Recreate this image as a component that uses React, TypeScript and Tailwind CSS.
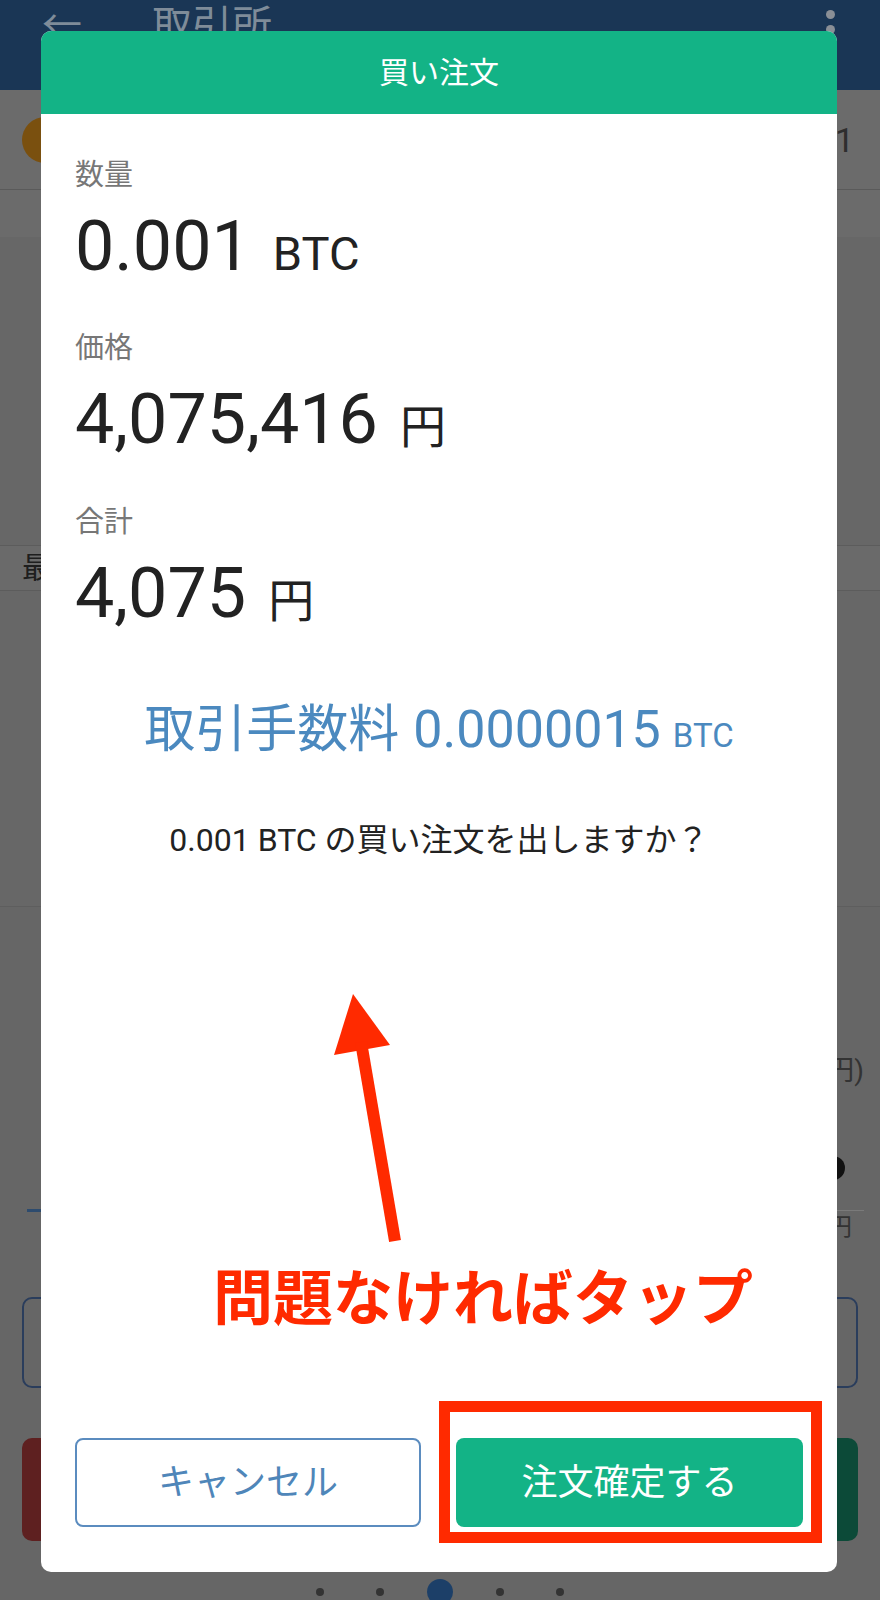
const font = "font-['Roboto','Noto_Sans_CJK_JP',sans-serif]";

function BackgroundScreen() {
  return (
    <div className="flex h-[1600px] w-[880px] flex-col bg-[#676767]">
      <header className="flex h-[90px] shrink-0 items-start bg-[#1a3655] px-[42px] pt-[6px] text-[#7f8c99]">
        <span className="w-[110px] text-[40px] leading-none">←</span>
        <span className="text-[40px] leading-none">取引所</span>
        <span className="ml-auto mt-[4px] flex flex-col gap-[6px] pr-[3px]">
          <span className="h-[9px] w-[9px] rounded-full bg-[#8a8f96]" />
          <span className="h-[9px] w-[9px] rounded-full bg-[#8a8f96]" />
          <span className="h-[9px] w-[9px] rounded-full bg-[#8a8f96]" />
        </span>
      </header>
      <div className="flex h-[100px] shrink-0 items-center justify-between border-b border-[#5a5a5a] bg-[#6b6b6b] pl-[22px] pr-[26px]">
        <span className="h-[46px] w-[46px] rounded-full bg-[#7a500f]" />
        <span className="text-[34px] leading-none text-[#2e2e2e]">1</span>
      </div>
      <div className="h-[47px] shrink-0 bg-[#6b6b6b]" />
      <div className="h-[308px] shrink-0" />
      <div className="flex h-[46px] shrink-0 items-center border-y border-[#5c5c5c] bg-[#6a6a6a] pl-[22px]">
        <span className="text-[30px] leading-none text-[#1e1e1e]">最</span>
      </div>
      <div className="h-[316px] shrink-0 border-b border-[#5e5e5e]" />
      <div className="flex flex-1 flex-col bg-[#666666] px-[22px]">
        <div className="mr-[-6px] mt-[149px] flex h-[30px] items-center justify-end text-[28px] leading-none text-[#333]">
          (円)
        </div>
        <div className="mt-[70px] flex h-[24px] justify-end pr-[13px]">
          <span className="h-[24px] w-[24px] rounded-full bg-[#111]" />
        </div>
        <div className="mt-[29px] flex h-[3px] items-center justify-between">
          <span className="ml-[5px] h-[3px] w-[60px] bg-[#2d4b6e]" />
          <span className="mr-[-6px] h-px w-[60px] bg-[#7a7a7a]" />
        </div>
        <div className="mt-[3px] flex h-[24px] items-center justify-end pr-[6px] text-[24px] leading-none text-[#333]">
          円
        </div>
        <div className="mt-[58px] grid h-[91px] grid-cols-2 gap-[30px]">
          <div className="rounded-[10px] border-2 border-[#2a3d5c]" />
          <div className="rounded-[10px] border-2 border-[#2a3d5c]" />
        </div>
        <div className="mt-[50px] grid h-[103px] grid-cols-2 gap-[30px]">
          <div className="rounded-[10px] bg-[#5e2020]" />
          <div className="rounded-[10px] bg-[#0c4a38]" />
        </div>
        <div className="mt-[38px] flex items-center justify-center">
          <span className="flex w-[60px] justify-center"><span className="h-[8px] w-[8px] rounded-full bg-[#333]" /></span>
          <span className="flex w-[60px] justify-center"><span className="h-[8px] w-[8px] rounded-full bg-[#333]" /></span>
          <span className="flex w-[60px] justify-center"><span className="h-[26px] w-[26px] rounded-full bg-[#1c3f68]" /></span>
          <span className="flex w-[60px] justify-center"><span className="h-[8px] w-[8px] rounded-full bg-[#333]" /></span>
          <span className="flex w-[60px] justify-center"><span className="h-[8px] w-[8px] rounded-full bg-[#333]" /></span>
        </div>
      </div>
    </div>
  );
}

function Field({ label, value, unit, unitClass }: { label: string; value: string; unit: string; unitClass: string }) {
  return (
    <>
      <div className="text-[29px] leading-none text-[#777]">{label}</div>
      <div className="mt-[21px] flex h-[70px] items-baseline text-[#222]">
        <span className="text-[70px] leading-none">{value}</span>
        <span className={unitClass}>{unit}</span>
      </div>
    </>
  );
}

function OrderDialog() {
  return (
    <div className="absolute left-[41px] top-[31px] w-[796px] overflow-hidden rounded-[10px] bg-white">
      <div className="flex h-[83px] items-center justify-center bg-[#13b386] text-[30px] text-white">買い注文</div>
      <div className="flex flex-col pb-[45px] pl-[34px] pr-[34px] pt-[47px]">
        <Field label="数量" value="0.001" unit="BTC" unitClass="ml-[22px] text-[47px] leading-none" />
        <div className="mt-[53px]" />
        <Field label="価格" value="4,075,416" unit="円" unitClass="ml-[22px] text-[46px] leading-none" />
        <div className="mt-[54px]" />
        <Field label="合計" value="4,075" unit="円" unitClass="ml-[22px] text-[46px] leading-none" />

        <div className="mt-[76px] flex items-baseline justify-center text-[#4b89bf]">
          <span className="text-[51px] leading-none">取引手数料</span>
          <span className="ml-[14px] text-[52px] leading-none">0.0000015</span>
          <span className="ml-[12px] text-[33px] leading-none">BTC</span>
        </div>

        <p className="mt-[68px] text-center text-[32px] leading-none text-[#222]">0.001 BTC の買い注文を出しますか？</p>

        <svg className="ml-[252px] mt-[130px] block" width="80" height="260" viewBox="0 0 80 260">
          <polygon points="26,8 7,69 63,59" fill="#ff2a00" />
          <line x1="34" y1="56" x2="68" y2="255" stroke="#ff2a00" strokeWidth="12" />
        </svg>

        <div className="ml-[138px] mt-[24px] text-[60px] font-bold leading-none text-[#ff2a00]">問題なければタップ</div>

        <div className="mt-[108px] flex gap-[35px]">
          <button className="flex h-[89px] w-[346px] items-center justify-center rounded-[8px] border-2 border-[#5b8cbf] text-[36px] text-[#4f86b9]">
            キャンセル
          </button>
          <div className="relative">
            <button className="flex h-[89px] w-[347px] items-center justify-center rounded-[8px] bg-[#13b386] text-[36px] text-white">
              注文確定する
            </button>
            <div className="pointer-events-none absolute -bottom-[16px] -left-[17px] -right-[19px] -top-[37px] border-[11px] border-[#ff2a00]" />
          </div>
        </div>
      </div>
    </div>
  );
}

export default function App() {
  return (
    <div className={`relative h-[1600px] w-[880px] overflow-hidden ${font}`}>
      <BackgroundScreen />
      <OrderDialog />
    </div>
  );
}
